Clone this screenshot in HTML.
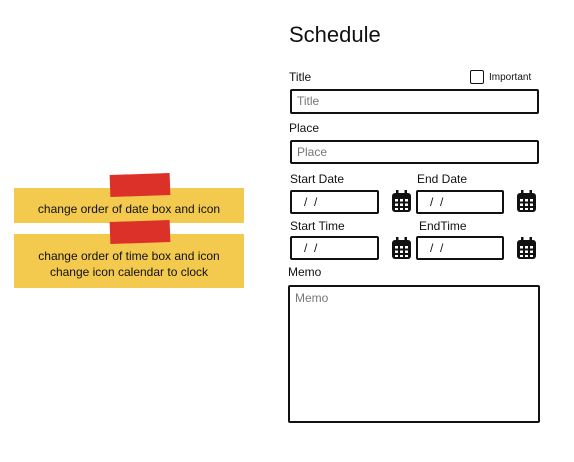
<!DOCTYPE html>
<html><head><meta charset="utf-8"><style>
body{margin:0;width:574px;height:462px;background:#fff;position:relative;overflow:hidden;font-family:"Comic Sans MS","Liberation Sans",sans-serif;color:#111}
.a{position:absolute}
.lbl{font-size:12px}
.box{position:absolute;border:2px solid #111;border-radius:2px;box-sizing:border-box;background:#fff;font-size:12px;color:#777;padding-left:5px}
.note{position:absolute;background:#f3c94e;font-size:12px;text-align:center;line-height:16px;color:#111}
.tape{position:absolute;background:#dc3129;transform:rotate(-2deg)}
</style></head><body>
<div class="a" style="left:289px;top:22px;font-size:22px">Schedule</div>
<div class="a lbl" style="left:289px;top:70px">Title</div>
<div class="a" style="left:470px;top:70px;width:12px;height:12px;border:1.5px solid #111;border-radius:2px"></div>
<div class="a" style="left:489px;top:72px;font-size:10px">Important</div>
<div class="box" style="left:290px;top:89px;width:249px;height:25px;line-height:21px">Title</div>
<div class="a lbl" style="left:289px;top:121px">Place</div>
<div class="box" style="left:290px;top:140px;width:249px;height:24px;line-height:20px">Place</div>
<div class="a lbl" style="left:290px;top:172px">Start Date</div>
<div class="a lbl" style="left:417px;top:172px">End Date</div>
<div class="box" style="left:290px;top:190px;width:89px;height:24px;line-height:20px;color:#111;padding-left:12px">/ &nbsp;/</div>
<div class="box" style="left:416px;top:190px;width:88px;height:24px;line-height:20px;color:#111;padding-left:12px">/ &nbsp;/</div>
<div class="a lbl" style="left:290px;top:219px">Start Time</div>
<div class="a lbl" style="left:419px;top:219px">EndTime</div>
<div class="box" style="left:290px;top:236px;width:89px;height:24px;line-height:20px;color:#111;padding-left:12px">/ &nbsp;/</div>
<div class="box" style="left:416px;top:236px;width:88px;height:24px;line-height:20px;color:#111;padding-left:12px">/ &nbsp;/</div>
<svg class="a" style="left:391px;top:189px" width="21" height="24" viewBox="0 0 21 24"><rect x="1" y="4" width="19" height="19" rx="3" fill="#111"/><rect x="5" y="1" width="2.5" height="5" fill="#111"/><rect x="13.5" y="1" width="2.5" height="5" fill="#111"/><g fill="#fff"><rect x="4" y="10" width="3" height="2.5"/><rect x="9" y="10" width="3" height="2.5"/><rect x="14" y="10" width="3" height="2.5"/><rect x="4" y="14.5" width="3" height="2.5"/><rect x="9" y="14.5" width="3" height="2.5"/><rect x="14" y="14.5" width="3" height="2.5"/><rect x="4" y="19" width="3" height="2"/><rect x="9" y="19" width="3" height="2"/><rect x="14" y="19" width="3" height="2"/></g></svg>
<svg class="a" style="left:516px;top:189px" width="21" height="24" viewBox="0 0 21 24"><rect x="1" y="4" width="19" height="19" rx="3" fill="#111"/><rect x="5" y="1" width="2.5" height="5" fill="#111"/><rect x="13.5" y="1" width="2.5" height="5" fill="#111"/><g fill="#fff"><rect x="4" y="10" width="3" height="2.5"/><rect x="9" y="10" width="3" height="2.5"/><rect x="14" y="10" width="3" height="2.5"/><rect x="4" y="14.5" width="3" height="2.5"/><rect x="9" y="14.5" width="3" height="2.5"/><rect x="14" y="14.5" width="3" height="2.5"/><rect x="4" y="19" width="3" height="2"/><rect x="9" y="19" width="3" height="2"/><rect x="14" y="19" width="3" height="2"/></g></svg>
<svg class="a" style="left:391px;top:236px" width="21" height="24" viewBox="0 0 21 24"><rect x="1" y="4" width="19" height="19" rx="3" fill="#111"/><rect x="5" y="1" width="2.5" height="5" fill="#111"/><rect x="13.5" y="1" width="2.5" height="5" fill="#111"/><g fill="#fff"><rect x="4" y="10" width="3" height="2.5"/><rect x="9" y="10" width="3" height="2.5"/><rect x="14" y="10" width="3" height="2.5"/><rect x="4" y="14.5" width="3" height="2.5"/><rect x="9" y="14.5" width="3" height="2.5"/><rect x="14" y="14.5" width="3" height="2.5"/><rect x="4" y="19" width="3" height="2"/><rect x="9" y="19" width="3" height="2"/><rect x="14" y="19" width="3" height="2"/></g></svg>
<svg class="a" style="left:516px;top:236px" width="21" height="24" viewBox="0 0 21 24"><rect x="1" y="4" width="19" height="19" rx="3" fill="#111"/><rect x="5" y="1" width="2.5" height="5" fill="#111"/><rect x="13.5" y="1" width="2.5" height="5" fill="#111"/><g fill="#fff"><rect x="4" y="10" width="3" height="2.5"/><rect x="9" y="10" width="3" height="2.5"/><rect x="14" y="10" width="3" height="2.5"/><rect x="4" y="14.5" width="3" height="2.5"/><rect x="9" y="14.5" width="3" height="2.5"/><rect x="14" y="14.5" width="3" height="2.5"/><rect x="4" y="19" width="3" height="2"/><rect x="9" y="19" width="3" height="2"/><rect x="14" y="19" width="3" height="2"/></g></svg>
<div class="a lbl" style="left:288px;top:265px">Memo</div>
<div class="box" style="left:288px;top:285px;width:252px;height:138px;padding-top:4px">Memo</div>
<div class="note" style="left:14px;top:188px;width:230px;height:35px;line-height:16px;padding-top:13px;box-sizing:border-box">change order of date box and icon</div>
<div class="tape" style="left:110px;top:174px;width:60px;height:22px"></div>
<div class="note" style="left:14px;top:234px;width:230px;height:54px;padding-top:14px;box-sizing:border-box">change order of time box and icon<br>change icon calendar to clock</div>
<div class="tape" style="left:110px;top:221px;width:60px;height:22px"></div>
</body></html>
